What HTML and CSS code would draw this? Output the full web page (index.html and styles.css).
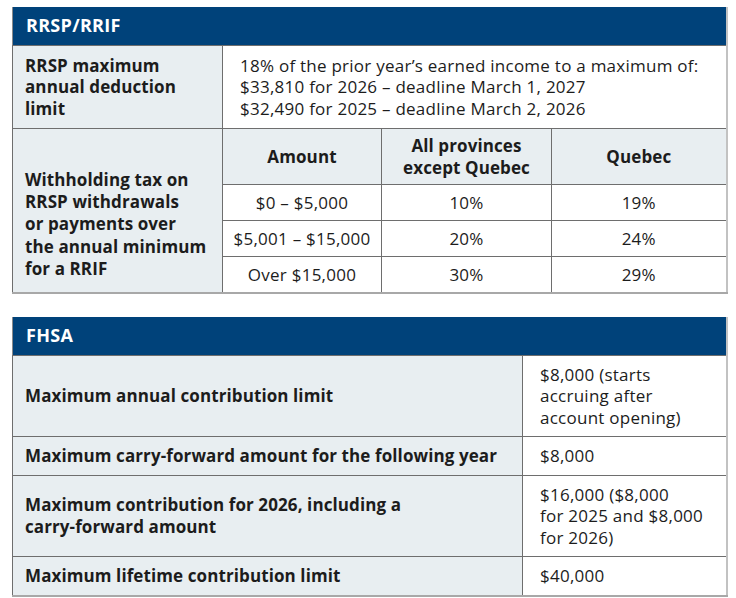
FILE: index.html
```html
<!DOCTYPE html>
<html lang="en">
<head>
<meta charset="utf-8">
<title>RRSP/RRIF and FHSA</title>
<link rel="stylesheet" href="styles.css">
</head>
<body>
<div class="page">
  <table class="info rrsp">
    <colgroup>
      <col class="c-label">
      <col class="c-amount">
      <col class="c-prov">
      <col class="c-qc">
    </colgroup>
    <thead>
      <tr><th colspan="4" class="band">RRSP/RRIF</th></tr>
    </thead>
    <tbody>
      <tr>
        <th class="label">RRSP maximum<br>annual deduction<br>limit</th>
        <td colspan="3" class="value">18% of the prior year’s earned income to a maximum of:<br>$33,810 for 2026 – deadline March 1, 2027<br>$32,490 for 2025 – deadline March 2, 2026</td>
      </tr>
      <tr>
        <th rowspan="4" class="label label-top">Withholding tax on<br>RRSP withdrawals<br>or payments over<br>the annual minimum<br>for a RRIF</th>
        <th class="sub">Amount</th>
        <th class="sub">All provinces<br>except Quebec</th>
        <th class="sub">Quebec</th>
      </tr>
      <tr><td class="num">$0 – $5,000</td><td class="num">10%</td><td class="num">19%</td></tr>
      <tr><td class="num">$5,001 – $15,000</td><td class="num">20%</td><td class="num">24%</td></tr>
      <tr><td class="num">Over $15,000</td><td class="num">30%</td><td class="num">29%</td></tr>
    </tbody>
  </table>

  <table class="info fhsa">
    <colgroup>
      <col class="c-flabel">
      <col class="c-fval">
    </colgroup>
    <thead>
      <tr><th colspan="2" class="band">FHSA</th></tr>
    </thead>
    <tbody>
      <tr>
        <th class="label">Maximum annual contribution limit</th>
        <td class="value">$8,000 (starts<br>accruing after<br>account opening)</td>
      </tr>
      <tr>
        <th class="label">Maximum carry-forward amount for the following year</th>
        <td class="value">$8,000</td>
      </tr>
      <tr>
        <th class="label">Maximum contribution for 2026, including a<br>carry-forward amount</th>
        <td class="value">$16,000 ($8,000<br>for 2025 and $8,000<br>for 2026)</td>
      </tr>
      <tr>
        <th class="label">Maximum lifetime contribution limit</th>
        <td class="value">$40,000</td>
      </tr>
    </tbody>
  </table>
</div>
</body>
</html>
```

FILE: styles.css
```css
html, body {
  margin: 0;
  padding: 0;
  background: #ffffff;
}

body {
  font-family: "Open Sans", "Noto Sans", sans-serif;
  font-size: 17px;
  line-height: 21.5px;
  letter-spacing: 0.25px;
  color: #1c1c1c;
}

.page {
  padding: 7px 0 0 12px;
  width: 714px;
  display: flex;
  flex-direction: column;
  gap: 23px;
}

.info {
  width: 714px;
  border-collapse: collapse;
  table-layout: fixed;
  border-left: 1px solid #8a8a8a;
  border-right: 2px solid #c2c2c2;
  border-bottom: 2px solid #a8a8a8;
}

.c-label { width: 210px; }
.c-amount { width: 159px; }
.c-prov { width: 170px; }
.c-qc { width: 175px; }

.c-flabel { width: 510px; }
.c-fval { width: 204px; }

.info th,
.info td {
  border: 1px solid #6e6e6e;
  text-align: left;
  vertical-align: middle;
  font-weight: normal;
  white-space: nowrap;
}

.info .band {
  background: #00427a;
  color: #ffffff;
  font-weight: 700;
  font-size: 18px;
  letter-spacing: 0.3px;
  height: 38px;
  box-sizing: border-box;
  padding: 0 13px;
  border: none;
  border-right: 2px solid #c2c2c2;
}

.info .label {
  background: #e8eef1;
  font-weight: 700;
  letter-spacing: 0.1px;
  padding: 9px 12px;
}

.info .label-top {
  vertical-align: top;
  padding-top: 40px;
  line-height: 22.2px;
}

.info .value {
  padding: 9px 12px 9px 17px;
}

.fhsa .label,
.fhsa .value {
  padding-top: 8px;
  padding-bottom: 8px;
}

.info .sub {
  background: #e8eef1;
  font-weight: 700;
  letter-spacing: 0.1px;
  text-align: center;
  padding: 6px 8px;
}

.info .num {
  text-align: center;
  padding: 7px 8px 6.5px;
}
```
